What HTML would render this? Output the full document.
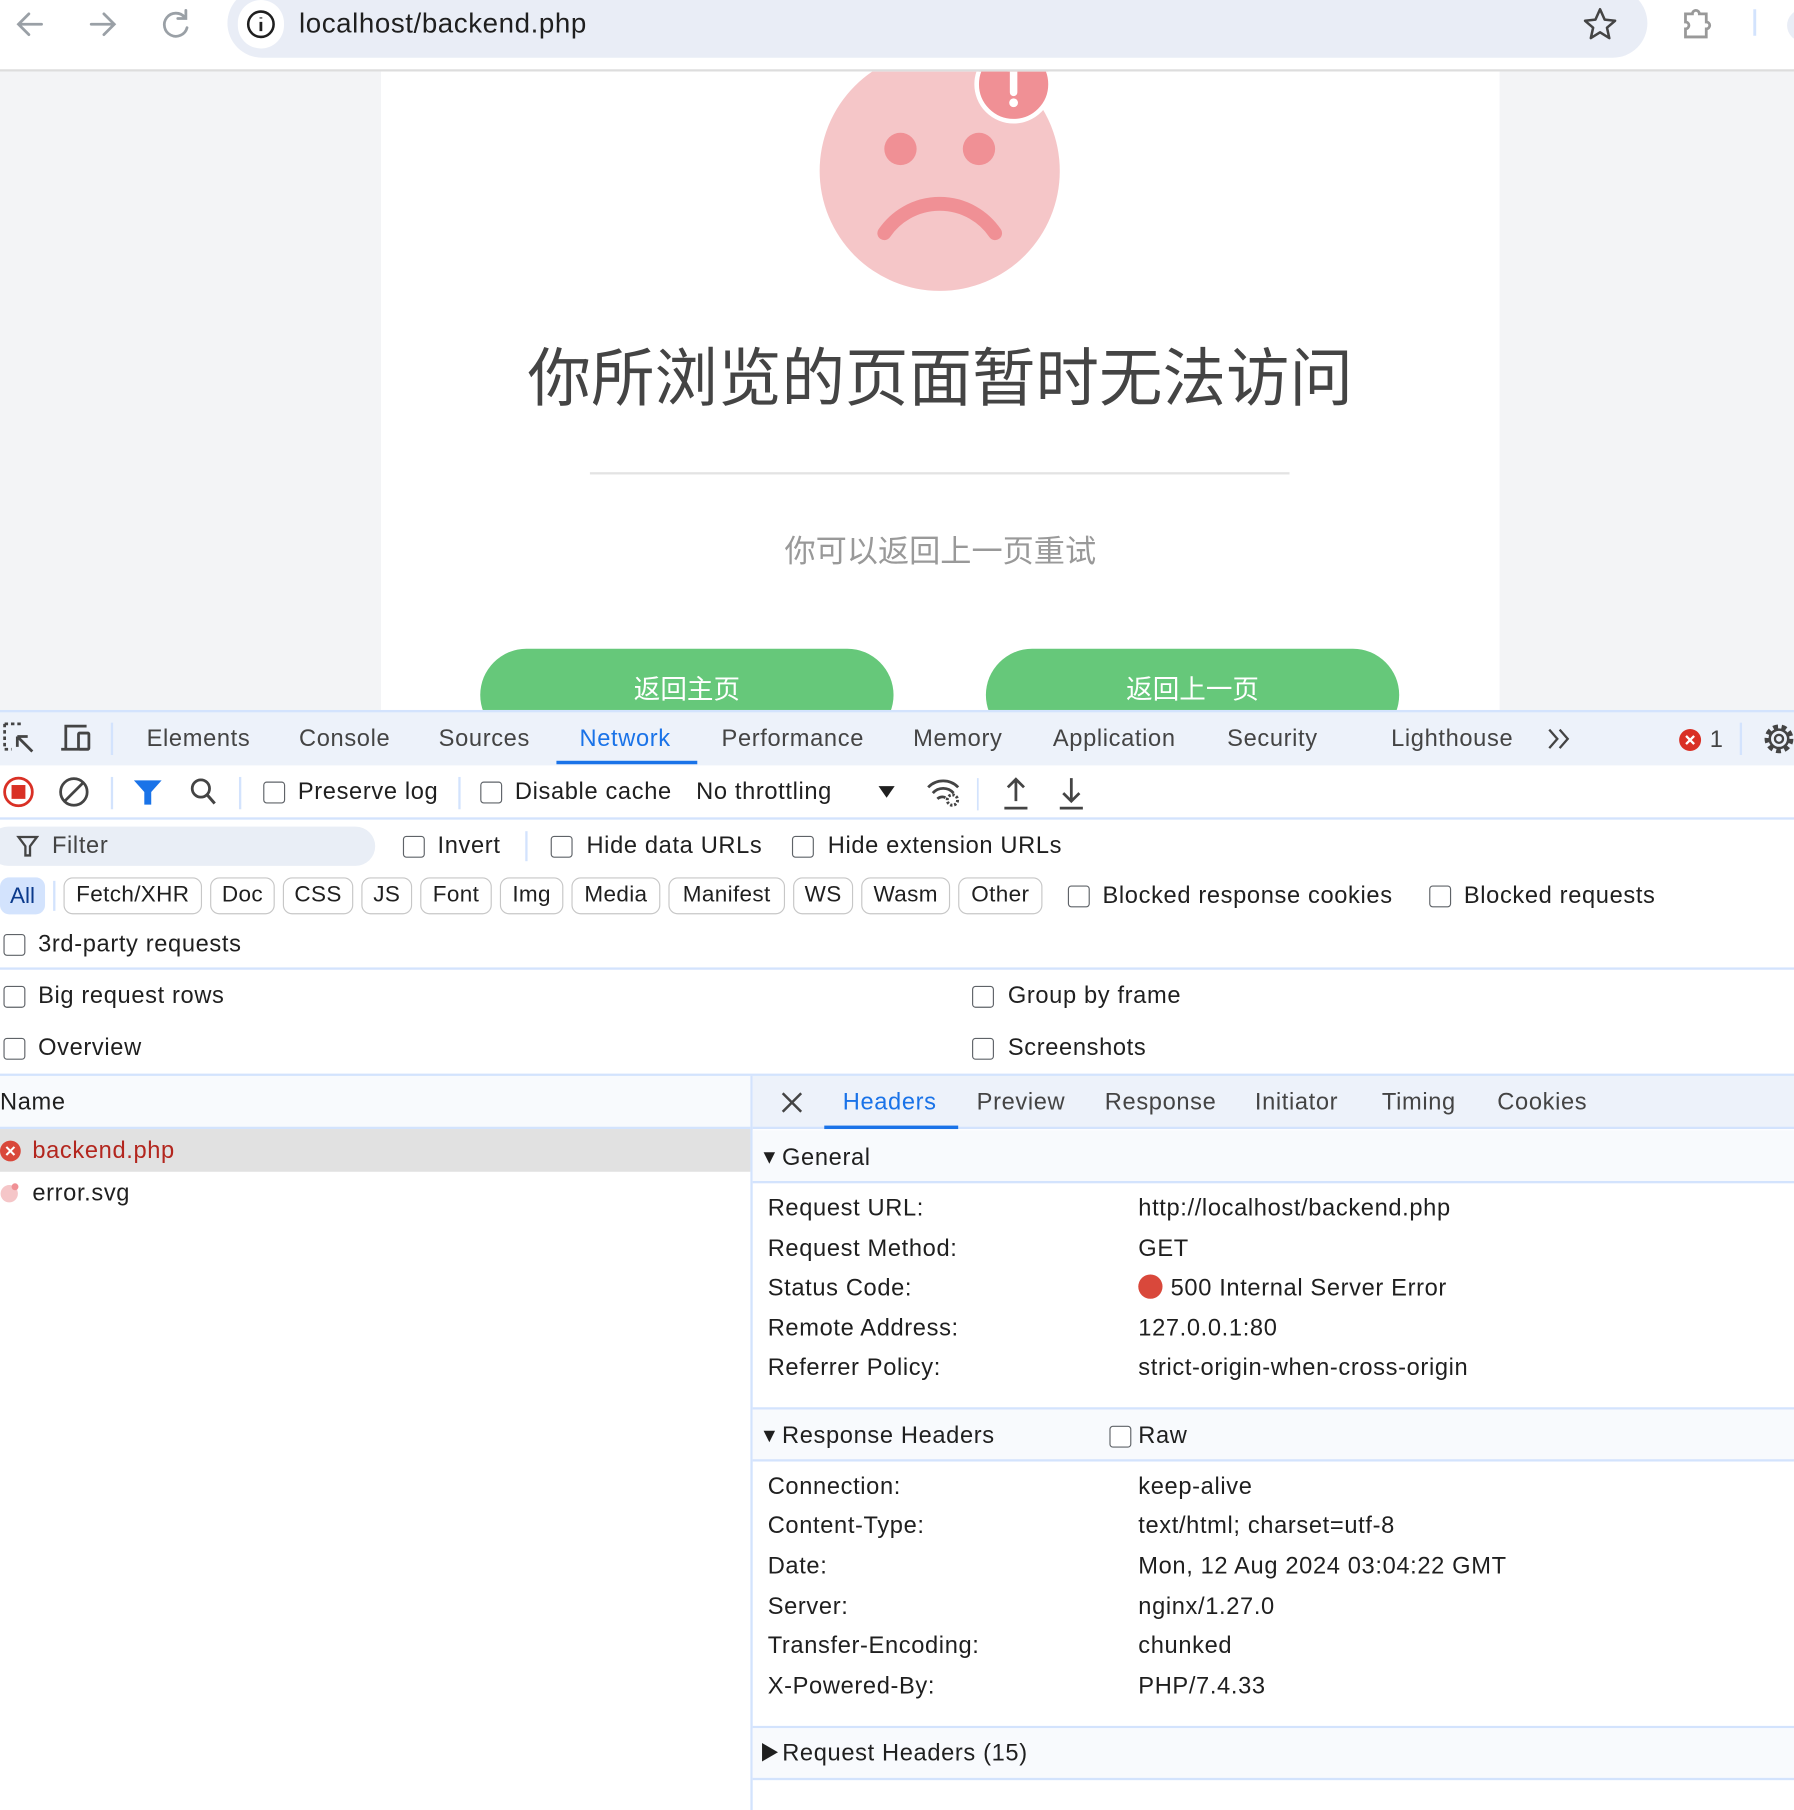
<!DOCTYPE html>
<html><head><meta charset="utf-8"><style>
html,body{margin:0;padding:0;width:1794px;height:1810px;overflow:hidden;background:#fff}
#w{position:absolute;left:0;top:0;width:1554px;height:1568px;transform:scale(1.15444);transform-origin:0 0;font-family:"Liberation Sans","Noto Sans CJK SC",sans-serif;color:#1f1f1f}
.a{position:absolute;white-space:nowrap}
.t{font-size:20.5px;line-height:24px;letter-spacing:.55px}
.cb{position:absolute;width:17px;height:17px;border:1.6px solid #5f6368;border-radius:3px;box-sizing:border-box;background:#fff}
.chip{position:absolute;top:760px;height:32px;border:1.5px solid #c7c7c7;border-radius:8px;box-sizing:border-box;font-size:19.5px;line-height:29px;text-align:center;color:#1f1f1f;letter-spacing:.3px}
.hl{position:absolute;left:0;right:0;height:2px;background:#d3e3fd}
.k{left:665px}.v{left:986px}
.tri{font-size:17px;position:relative;top:-1px;margin-right:2px}
</style></head><body><div id="w">
<div class="a" style="left:0;top:0;width:1554px;height:61px;background:#fff"></div>
<div class="a" style="left:197px;top:-10px;width:1230px;height:60px;background:#e9edf6;border-radius:30px"></div>
<div class="a" style="left:206px;top:0;width:40px;height:42px;background:#fff;border-radius:21px"></div>
<svg class="a" style="left:0;top:0" width="260" height="45">
<g stroke="#9aa0a6" stroke-width="2.4" fill="none" stroke-linecap="round"><path d="M36 21H17M25 12l-9 9 9 9"/><path d="M79 21h19M90 12l9 9-9 9"/><path d="M160 15a10 10 0 1 0 2 9"/><path d="M161 9v7h-7"/></g>
<circle cx="226" cy="21" r="11" fill="none" stroke="#1f1f1f" stroke-width="2.2"/><path d="M226 19v8M226 15v1" stroke="#1f1f1f" stroke-width="2.4"/></svg>
<div class="a" style="left:259px;top:5px;font-size:24px;line-height:32px;color:#1f1f1f;letter-spacing:.5px">localhost/backend.php</div>
<svg class="a" style="left:1370px;top:5px" width="184" height="34"><path d="M16 3l4 9 9 1-7 6 2 9-8-5-8 5 2-9-7-6 9-1z" fill="none" stroke="#444" stroke-width="2.2" stroke-linejoin="round"/>
<path d="M92 7h6a3 3 0 0 1 6 0h6v7a3 3 0 0 1 0 6v7H92v-7a3 3 0 0 0 0-6z" fill="none" stroke="#999" stroke-width="2.4" transform="translate(-2,0)"/>
<path d="M150 3v23" stroke="#d3e3fd" stroke-width="2.5"/><circle cx="192" cy="17" r="14" fill="#e9edf6"/></svg>
<div class="a" style="left:0;top:60px;width:1554px;height:2px;background:#ddd"></div>
<div class="a" style="left:0;top:62px;width:1554px;height:554px;background:#f3f4f6"></div>
<div class="a" style="left:330px;top:62px;width:969px;height:554px;background:#fff;overflow:hidden">
<svg class="a" style="left:370px;top:-62px" width="230" height="320">
<circle cx="114" cy="148" r="104" fill="#f5c6c8"/><circle cx="80" cy="129" r="14" fill="#f09095"/><circle cx="148" cy="129" r="14" fill="#f09095"/>
<path d="M66 202a58 58 0 0 1 96 0" fill="none" stroke="#f09095" stroke-width="12" stroke-linecap="round"/>
<circle cx="178" cy="73" r="32" fill="#f09095" stroke="#fff" stroke-width="4"/>
<path d="M178 60v20" stroke="#fff" stroke-width="6.5" stroke-linecap="round"/><circle cx="178" cy="89" r="3.8" fill="#fff"/></svg>
<div class="a" style="left:0;width:969px;top:228px;text-align:center;font-size:55px;line-height:76px;color:#444">你所浏览的页面暂时无法访问</div>
<div class="a" style="left:181px;top:347px;width:606px;height:2px;background:#e3e3e3"></div>
<div class="a" style="left:0;width:969px;top:397px;text-align:center;font-size:27px;line-height:38px;color:#999">你可以返回上一页重试</div>
<div class="a" style="left:86px;top:500px;width:358px;height:80px;border-radius:40px;background:#66c87a;color:#fff;text-align:center;font-size:23px;line-height:70px">返回主页</div>
<div class="a" style="left:524px;top:500px;width:358px;height:80px;border-radius:40px;background:#66c87a;color:#fff;text-align:center;font-size:23px;line-height:70px">返回上一页</div>
</div>
<div class="a" style="left:0;top:615px;width:1554px;height:48px;background:#edf2fa;border-top:2px solid #d3e3fd;box-sizing:border-box"></div>
<svg class="a" style="left:0;top:622px" width="100" height="36"><path d="M4 5h14M4 5v22M4 27h6" stroke="#444" stroke-width="2.4" stroke-dasharray="3 2.5" fill="none"/><path d="M28 29L15 16M15 16v9M15 16h9" stroke="#444" stroke-width="2.4" fill="none"/>
<path d="M57 27V7h18M53 27h24" stroke="#444" stroke-width="2.4" fill="none"/><rect x="68" y="13" width="9" height="14" rx="1" fill="none" stroke="#444" stroke-width="2.4"/></svg>
<div class="a" style="left:96px;top:626px;width:1.5px;height:28px;background:#d3e3fd"></div>
<div class="a t" style="top:628px;left:127px;color:#444">Elements</div>
<div class="a t" style="top:628px;left:259px;color:#444">Console</div>
<div class="a t" style="top:628px;left:380px;color:#444">Sources</div>
<div class="a t" style="top:628px;left:502px;color:#1a73e8">Network</div>
<div class="a" style="left:482px;top:659px;width:122px;height:3px;background:#1a73e8"></div>
<div class="a t" style="top:628px;left:625px;color:#444">Performance</div>
<div class="a t" style="top:628px;left:791px;color:#444">Memory</div>
<div class="a t" style="top:628px;left:912px;color:#444">Application</div>
<div class="a t" style="top:628px;left:1063px;color:#444">Security</div>
<div class="a t" style="top:628px;left:1205px;color:#444">Lighthouse</div>
<svg class="a" style="left:1338px;top:628px" width="30" height="24"><path d="M4 4l7 8-7 8M13 4l7 8-7 8" fill="none" stroke="#444" stroke-width="2"/></svg>
<svg class="a" style="left:1453px;top:630px" width="24" height="24"><circle cx="11" cy="11" r="9.5" fill="#d93025"/><path d="M7.5 7.5l7 7M14.5 7.5l-7 7" stroke="#fff" stroke-width="2"/></svg>
<div class="a t" style="left:1481px;top:629px;color:#444">1</div>
<div class="a" style="left:1507px;top:626px;width:1.5px;height:28px;background:#d3e3fd"></div>
<svg class="a" style="left:1526px;top:626px" width="28" height="28"><circle cx="15" cy="14" r="10" fill="none" stroke="#444" stroke-width="5" stroke-dasharray="4 3"/><circle cx="15" cy="14" r="8" fill="none" stroke="#444" stroke-width="2.2"/><circle cx="15" cy="14" r="3.5" fill="none" stroke="#444" stroke-width="2"/></svg>
<div class="hl" style="top:708px"></div>
<svg class="a" style="left:0;top:670px" width="200" height="34"><circle cx="16" cy="16" r="12" fill="none" stroke="#d93025" stroke-width="2.4"/><rect x="10" y="10" width="12" height="12" fill="#d93025"/>
<circle cx="64" cy="16" r="11.5" fill="none" stroke="#444" stroke-width="2.4"/><path d="M56 24l16-16" stroke="#444" stroke-width="2.4"/>
<path d="M116 6h24l-9 10v11h-6V16z" fill="#1a73e8"/><circle cx="174" cy="13" r="7.5" fill="none" stroke="#444" stroke-width="2.4"/><path d="M179 18l7 8" stroke="#444" stroke-width="2.6"/></svg>
<div class="a" style="left:96px;top:673px;width:1.5px;height:28px;background:#d3e3fd"></div>
<div class="a" style="left:207px;top:673px;width:1.5px;height:28px;background:#d3e3fd"></div>
<div class="cb" style="left:228px;top:677px;width:19px;height:19px"></div><div class="a t" style="left:258px;top:674px">Preserve log</div>
<div class="a" style="left:397px;top:673px;width:1.5px;height:28px;background:#d3e3fd"></div>
<div class="cb" style="left:416px;top:677px;width:19px;height:19px"></div><div class="a t" style="left:446px;top:674px">Disable cache</div>
<div class="a t" style="left:603px;top:674px">No throttling</div>
<svg class="a" style="left:758px;top:678px" width="20" height="16"><path d="M3 3h14l-7 10z" fill="#1f1f1f"/></svg>
<svg class="a" style="left:800px;top:670px" width="140" height="34"><path d="M4 12a18 18 0 0 1 26 0M8 17a12 12 0 0 1 18 0M12 22a6 6 0 0 1 7 -1" fill="none" stroke="#444" stroke-width="2.4"/><circle cx="25" cy="23" r="4.5" fill="none" stroke="#444" stroke-width="2.6" stroke-dasharray="2 1.5"/>
<path d="M47 4v28" stroke="#d3e3fd" stroke-width="1.5"/>
<path d="M80 24V6M73 12l7-7 7 7M70 30h20" fill="none" stroke="#444" stroke-width="2.4"/><path d="M128 4v20M121 17l7 7 7-7M118 30h20" fill="none" stroke="#444" stroke-width="2.4"/></svg>
<div class="a" style="left:-10px;top:716px;width:335px;height:34px;background:#e9eef6;border-radius:17px"></div>
<svg class="a" style="left:14px;top:723px" width="20" height="20"><path d="M2 2h16l-6 8v8h-4v-8z" fill="none" stroke="#444" stroke-width="2"/></svg>
<div class="a t" style="left:45px;top:721px;color:#444">Filter</div>
<div class="cb" style="left:349px;top:724px;width:19px;height:19px"></div><div class="a t" style="left:379px;top:721px">Invert</div>
<div class="a" style="left:455px;top:720px;width:1.5px;height:26px;background:#d3e3fd"></div>
<div class="cb" style="left:477px;top:724px;width:19px;height:19px"></div><div class="a t" style="left:508px;top:721px">Hide data URLs</div>
<div class="cb" style="left:686px;top:724px;width:19px;height:19px"></div><div class="a t" style="left:717px;top:721px">Hide extension URLs</div>
<div class="a" style="left:0;top:760px;width:39px;height:32px;background:#d3e3fd;border-radius:8px;font-size:19.5px;line-height:32px;text-align:center;color:#0b3a8c">All</div>
<div class="a" style="left:46px;top:763px;width:1.5px;height:26px;background:#d3e3fd"></div>
<div class="chip" style="left:55px;width:120px">Fetch/XHR</div>
<div class="chip" style="left:182px;width:56px">Doc</div>
<div class="chip" style="left:245px;width:61px">CSS</div>
<div class="chip" style="left:313px;width:44px">JS</div>
<div class="chip" style="left:364px;width:62px">Font</div>
<div class="chip" style="left:433px;width:55px">Img</div>
<div class="chip" style="left:495px;width:77px">Media</div>
<div class="chip" style="left:579px;width:101px">Manifest</div>
<div class="chip" style="left:687px;width:52px">WS</div>
<div class="chip" style="left:746px;width:77px">Wasm</div>
<div class="chip" style="left:830px;width:73px">Other</div>
<div class="cb" style="left:925px;top:767px;width:19px;height:19px"></div><div class="a t" style="left:955px;top:764px">Blocked response cookies</div>
<div class="cb" style="left:1238px;top:767px;width:19px;height:19px"></div><div class="a t" style="left:1268px;top:764px">Blocked requests</div>
<div class="cb" style="left:3px;top:809px;width:19px;height:19px"></div><div class="a t" style="left:33px;top:806px">3rd-party requests</div>
<div class="hl" style="top:838px"></div>
<div class="cb" style="left:3px;top:854px;width:19px;height:19px"></div><div class="a t" style="left:33px;top:851px">Big request rows</div>
<div class="cb" style="left:842px;top:854px;width:19px;height:19px"></div><div class="a t" style="left:873px;top:851px">Group by frame</div>
<div class="cb" style="left:3px;top:899px;width:19px;height:19px"></div><div class="a t" style="left:33px;top:896px">Overview</div>
<div class="cb" style="left:842px;top:899px;width:19px;height:19px"></div><div class="a t" style="left:873px;top:896px">Screenshots</div>
<div class="hl" style="top:930px"></div>
<div class="a" style="left:0;top:932px;width:650px;height:45px;background:#f8fafd"></div>
<div class="a" style="left:0;top:976px;width:650px;height:2px;background:#d3e3fd"></div>
<div class="a t" style="left:0;top:943px">Name</div>
<div class="a" style="left:0;top:978px;width:650px;height:37px;background:#e1e1e1"></div>
<svg class="a" style="left:0;top:987px" width="20" height="20"><circle cx="9" cy="10" r="9" fill="#d9483b"/><path d="M5.5 6.5l7 7M12.5 6.5l-7 7" stroke="#fff" stroke-width="1.8"/></svg>
<div class="a t" style="left:28px;top:985px;color:#b3261e">backend.php</div>
<svg class="a" style="left:0;top:1024px" width="20" height="20"><circle cx="8" cy="10" r="7.5" fill="#f5c6c8"/><circle cx="13" cy="4" r="3" fill="#f09095"/></svg>
<div class="a t" style="left:28px;top:1022px">error.svg</div>
<div class="a" style="left:650px;top:932px;width:2px;height:636px;background:#d3e3fd"></div>
<div class="a" style="left:652px;top:932px;width:902px;height:45px;background:#edf2fa"></div>
<div class="a" style="left:652px;top:976px;width:902px;height:2px;background:#d3e3fd"></div>
<svg class="a" style="left:674px;top:943px" width="24" height="24"><path d="M4 4l16 16M20 4L4 20" stroke="#444" stroke-width="2.2"/></svg>
<div class="a t" style="left:730px;top:943px;color:#1a73e8">Headers</div>
<div class="a" style="left:714px;top:975px;width:116px;height:3px;background:#1a73e8"></div>
<div class="a t" style="left:846px;top:943px;color:#444">Preview</div>
<div class="a t" style="left:957px;top:943px;color:#444">Response</div>
<div class="a t" style="left:1087px;top:943px;color:#444">Initiator</div>
<div class="a t" style="left:1197px;top:943px;color:#444">Timing</div>
<div class="a t" style="left:1297px;top:943px;color:#444">Cookies</div>
<div class="a" style="left:652px;top:979px;width:902px;height:44px;background:#f8fafd"></div>
<div class="a" style="left:652px;top:1023px;width:902px;height:2px;background:#d3e3fd"></div>
<div class="a t" style="left:658px;top:991px"><span class="tri">▼</span>General</div>
<div class="a t k" style="top:1035px">Request URL:</div><div class="a t v" style="top:1035px">http://localhost/backend.php</div>
<div class="a t k" style="top:1070px">Request Method:</div><div class="a t v" style="top:1070px">GET</div>
<div class="a t k" style="top:1104px">Status Code:</div><div class="a t v" style="top:1104px"><span style="display:inline-block;width:21px;height:21px;border-radius:50%;background:#d9483b;vertical-align:-3px;margin-right:7px"></span>500 Internal Server Error</div>
<div class="a t k" style="top:1139px">Remote Address:</div><div class="a t v" style="top:1139px">127.0.0.1:80</div>
<div class="a t k" style="top:1173px">Referrer Policy:</div><div class="a t v" style="top:1173px">strict-origin-when-cross-origin</div>
<div class="a" style="left:652px;top:1219px;width:902px;height:2px;background:#d3e3fd"></div>
<div class="a" style="left:652px;top:1221px;width:902px;height:43px;background:#f8fafd"></div>
<div class="a" style="left:652px;top:1264px;width:902px;height:2px;background:#d3e3fd"></div>
<div class="a t" style="left:658px;top:1232px"><span class="tri">▼</span>Response Headers</div>
<div class="cb" style="left:961px;top:1235px;width:19px;height:19px"></div><div class="a t" style="left:986px;top:1232px">Raw</div>
<div class="a t k" style="top:1276px">Connection:</div><div class="a t v" style="top:1276px">keep-alive</div>
<div class="a t k" style="top:1310px">Content-Type:</div><div class="a t v" style="top:1310px">text/html; charset=utf-8</div>
<div class="a t k" style="top:1345px">Date:</div><div class="a t v" style="top:1345px">Mon, 12 Aug 2024 03:04:22 GMT</div>
<div class="a t k" style="top:1380px">Server:</div><div class="a t v" style="top:1380px">nginx/1.27.0</div>
<div class="a t k" style="top:1414px">Transfer-Encoding:</div><div class="a t v" style="top:1414px">chunked</div>
<div class="a t k" style="top:1449px">X-Powered-By:</div><div class="a t v" style="top:1449px">PHP/7.4.33</div>
<div class="a" style="left:652px;top:1495px;width:902px;height:2px;background:#d3e3fd"></div>
<div class="a" style="left:652px;top:1497px;width:902px;height:43px;background:#f8fafd"></div>
<div class="a" style="left:652px;top:1540px;width:902px;height:2px;background:#d3e3fd"></div>
<div class="a t" style="left:658px;top:1507px"><span class="tri">▶</span>Request Headers (15)</div>
</div></body></html>
